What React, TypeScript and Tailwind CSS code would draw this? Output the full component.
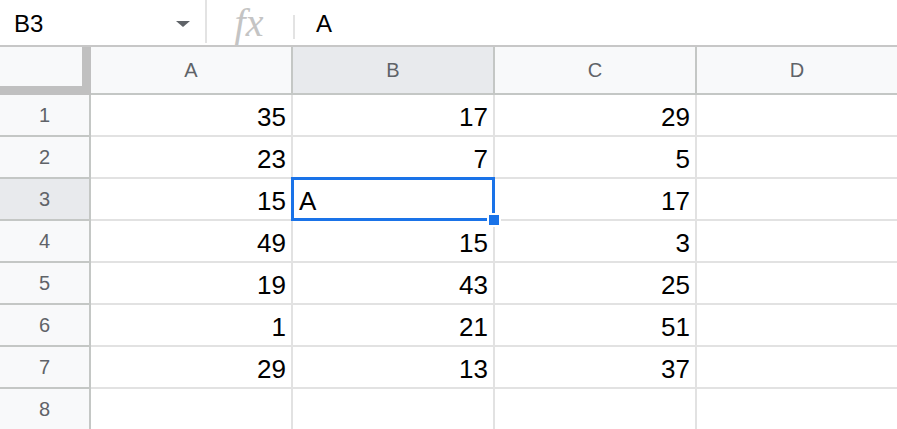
import React from "react";

const data: (string | number)[][] = [
  [35, 17, 29],
  [23, 7, 5],
  [15, "A", 17],
  [49, 15, 3],
  [19, 43, 25],
  [1, 21, 51],
  [29, 13, 37],
  ["", "", ""],
];

const cols = ["A", "B", "C", "D"];

export default function App() {
  return (
    <div
      className="w-[897px] h-[429px] overflow-hidden bg-white"
      style={{ fontFamily: '"Liberation Sans", Arial, sans-serif' }}
    >
      {/* formula bar */}
      <div className="flex h-[47px] border-b-2 border-[#c7c7c7]">
        <div className="w-[205px] flex items-center pl-[14px] pr-[14px]">
          <span className="text-[24px] text-black leading-none pt-[2px]">B3</span>
          <div className="ml-auto mr-[1px] mt-[2px] w-0 h-0 border-l-[7px] border-r-[7px] border-t-[6px] border-l-transparent border-r-transparent border-t-[#5f6368]" />
        </div>
        <div className="w-[2px] h-[43px] bg-[#e3e3e3]" />
        <div className="w-[86px] flex items-center justify-center">
          <span
            className="italic text-[40px] text-[#c4c4c4] leading-none pr-[2px]"
            style={{ fontFamily: '"Liberation Serif", "Times New Roman", serif' }}
          >
            fx
          </span>
        </div>
        <div className="w-[2px] h-[24px] mt-[15px] bg-[#e3e3e3]" />
        <div className="flex items-center pl-[21px]">
          <span className="text-[24px] text-black leading-none pt-[3px]">A</span>
        </div>
      </div>

      {/* grid */}
      <div className="grid grid-cols-[91px_202px_202px_202px_200px]">
        {/* corner */}
        <div className="h-[48px] bg-[#f8f9fa] border-r-[9px] border-b-[9px] border-[#c0c0c0]" />
        {cols.map((c, i) => (
          <div
            key={c}
            className={`h-[48px] flex items-center justify-center text-[20px] text-[#5f6368] border-b-2 border-[#c4c7c5] ${
              i < 3 ? "border-r-2" : ""
            } ${i === 1 ? "bg-[#e8eaed]" : "bg-[#f8f9fa]"}`}
          >
            {c}
          </div>
        ))}
        {data.map((row, r) => (
          <React.Fragment key={r}>
            <div
              className={`h-[42px] flex items-center justify-center text-[20px] text-[#5f6368] border-r-2 border-b-2 border-[#c4c7c5] ${
                r === 2 ? "bg-[#e8eaed]" : "bg-[#f8f9fa]"
              }`}
            >
              {r + 1}
            </div>
            {[0, 1, 2, 3].map((ci) => {
              const v = ci < 3 ? row[ci] : "";
              const isSel = r === 2 && ci === 1;
              const isText = typeof v === "string";
              return (
                <div
                  key={ci}
                  className={`relative h-[42px] flex items-end pb-[5px] text-[26px] leading-none text-black border-b-2 border-[#e2e2e2] ${
                    ci < 3 ? "border-r-2" : ""
                  } ${isText ? "justify-start pl-[6px]" : "justify-end pr-[5px]"} ${isSel ? "z-10" : ""}`}
                >
                  {v}
                  {isSel && (
                    <>
                      <div className="absolute -top-[2px] -left-[2px] -right-[2px] -bottom-[2px] border-[3px] border-[#1a73e8]" />
                      <div className="absolute -right-[8px] -bottom-[8px] w-[14px] h-[14px] bg-[#1a73e8] border-2 border-white" />
                    </>
                  )}
                </div>
              );
            })}
          </React.Fragment>
        ))}
      </div>
    </div>
  );
}
